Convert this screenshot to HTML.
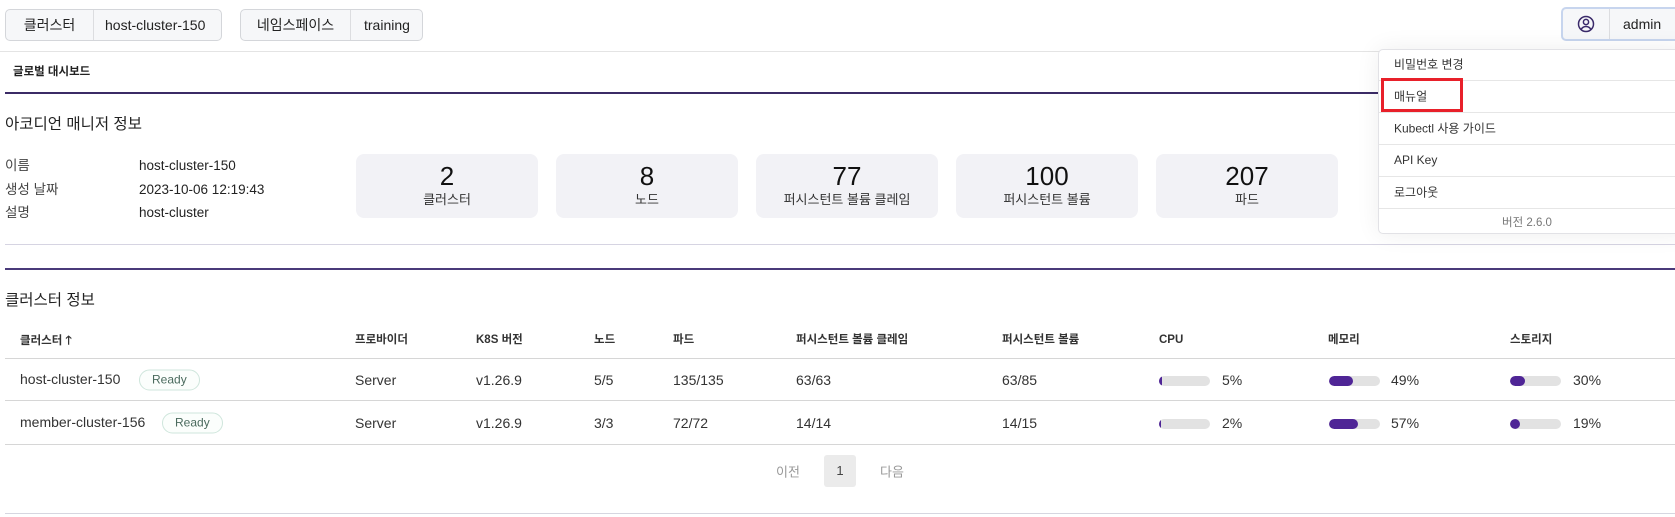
<!DOCTYPE html>
<html><head><meta charset="utf-8"><style>
*{box-sizing:border-box;margin:0;padding:0}
body{width:1675px;height:517px;overflow:hidden;background:#fff;font-family:"Liberation Sans","Noto Sans CJK KR",sans-serif;color:#222;position:relative}
.a{position:absolute;white-space:nowrap}
.box{position:absolute;border:1px solid #d4d6da;border-radius:5px;background:#f6f7f9;display:flex;font-size:14px;height:32px;top:9px;overflow:hidden;white-space:nowrap}
.box div{display:flex;align-items:center;padding:0 13px;white-space:nowrap;flex-shrink:0}
.box div+div{border-left:1px solid #dcdde0}
.hl{position:absolute;height:1px;background:#ddd}
.card{position:absolute;top:154px;height:64px;width:182px;background:#f2f2f6;border-radius:8px;text-align:center}
.card .n{font-size:26px;margin-top:7px;line-height:30px;color:#111}
.card .l{font-size:13px;line-height:18px;color:#333}
.th{position:absolute;top:333px;font-size:11.5px;line-height:15px;font-weight:bold;color:#333;white-space:nowrap}
.td{position:absolute;font-size:14px;color:#333;transform:translateY(-50%);white-space:nowrap}
.badge{position:absolute;height:21px;border:1px solid #cfe6dc;border-radius:11px;font-size:12px;color:#4b6b5e;padding:0 12px;line-height:19px;transform:translateY(-50%);background:#fbfefc}
.bar{position:absolute;width:51px;height:10px;background:#e2e2e2;border-radius:5px;overflow:hidden;transform:translateY(-50%)}
.bar i{display:block;height:10px;background:#4f2596;border-radius:5px}
.mi{position:absolute;left:1394px;font-size:12px;color:#333;transform:translateY(-50%);white-space:nowrap}
.ml{position:absolute;left:1379px;width:300px;height:1px;background:#e6e6e6}
</style></head><body>
<div class="box" style="left:5px;width:217px"><div style="width:87px;justify-content:center">클러스터</div><div style="padding:0 11px">host-cluster-150</div></div>
<div class="box" style="left:240px;width:183px"><div style="width:109px;justify-content:center">네임스페이스</div><div>training</div></div>
<div class="box" style="left:1561px;width:120px;top:7px;height:34px;border:2px solid #c7d5ee"><div style="width:46px;justify-content:center;padding:0"><svg width="18" height="18" viewBox="0 0 18 18"><circle cx="9" cy="9" r="7.5" fill="none" stroke="#3a2a6a" stroke-width="1.5"/><circle cx="9" cy="7" r="2.6" fill="none" stroke="#3a2a6a" stroke-width="1.5"/><path d="M4.2 14.3c1.2-2 2.8-2.8 4.8-2.8s3.6.8 4.8 2.8" fill="none" stroke="#3a2a6a" stroke-width="1.5"/></svg></div><div>admin</div></div>

<div class="hl" style="top:51px;left:0;width:1675px;background:#e4e4e4"></div>
<div class="a" style="left:13px;top:63px;font-size:11.5px;font-weight:bold;color:#222">글로벌 대시보드</div>
<div class="hl" style="top:92px;left:5px;width:1670px;height:2px;background:#3b2b66"></div>
<div class="a" style="left:5px;top:112px;font-size:15.5px">아코디언 매니저 정보</div>
<div class="a" style="left:5px;top:154px;font-size:13.5px;line-height:23.5px;color:#444">이름<br>생성 날짜<br>설명</div>
<div class="a" style="left:139px;top:154px;font-size:13.5px;line-height:23.5px;color:#222">host-cluster-150<br>2023-10-06 12:19:43<br>host-cluster</div>

<div class="card" style="left:356px"><div class="n">2</div><div class="l">클러스터</div></div>
<div class="card" style="left:556px"><div class="n">8</div><div class="l">노드</div></div>
<div class="card" style="left:756px"><div class="n">77</div><div class="l">퍼시스턴트 볼륨 클레임</div></div>
<div class="card" style="left:956px"><div class="n">100</div><div class="l">퍼시스턴트 볼륨</div></div>
<div class="card" style="left:1156px"><div class="n">207</div><div class="l">파드</div></div>

<div class="hl" style="top:244px;left:5px;width:1670px;background:#d6d4e2"></div>
<div class="hl" style="top:268px;left:5px;width:1670px;height:2px;background:#4a3a7a"></div>
<div class="a" style="left:5px;top:288px;font-size:15.5px">클러스터 정보</div>

<div class="th" style="left:20px">클러스터 <span style="font-size:12px">🡑</span></div>
<div class="th" style="left:355px">프로바이더</div>
<div class="th" style="left:476px">K8S 버전</div>
<div class="th" style="left:594px">노드</div>
<div class="th" style="left:673px">파드</div>
<div class="th" style="left:796px">퍼시스턴트 볼륨 클레임</div>
<div class="th" style="left:1002px">퍼시스턴트 볼륨</div>
<div class="th" style="left:1159px">CPU</div>
<div class="th" style="left:1328px">메모리</div>
<div class="th" style="left:1510px">스토리지</div>
<div class="hl" style="top:358px;left:5px;width:1670px;background:#d6d6d6"></div>
<div class="hl" style="top:400px;left:5px;width:1670px;background:#d6d6d6"></div>
<div class="hl" style="top:444px;left:5px;width:1670px;background:#d6d6d6"></div>

<div class="td" style="left:20px;top:379px">host-cluster-150</div>
<div class="badge" style="left:139px;top:380px">Ready</div>
<div class="td" style="left:355px;top:380px">Server</div>
<div class="td" style="left:476px;top:380px">v1.26.9</div>
<div class="td" style="left:594px;top:380px">5/5</div>
<div class="td" style="left:673px;top:380px">135/135</div>
<div class="td" style="left:796px;top:380px">63/63</div>
<div class="td" style="left:1002px;top:380px">63/85</div>
<div class="bar" style="left:1159px;top:381px"><i style="width:3px"></i></div><div class="td" style="left:1222px;top:380px">5%</div>
<div class="bar" style="left:1329px;top:381px"><i style="width:24px"></i></div><div class="td" style="left:1391px;top:380px">49%</div>
<div class="bar" style="left:1510px;top:381px"><i style="width:15px"></i></div><div class="td" style="left:1573px;top:380px">30%</div>

<div class="td" style="left:20px;top:422px">member-cluster-156</div>
<div class="badge" style="left:162px;top:423px">Ready</div>
<div class="td" style="left:355px;top:423px">Server</div>
<div class="td" style="left:476px;top:423px">v1.26.9</div>
<div class="td" style="left:594px;top:423px">3/3</div>
<div class="td" style="left:673px;top:423px">72/72</div>
<div class="td" style="left:796px;top:423px">14/14</div>
<div class="td" style="left:1002px;top:423px">14/15</div>
<div class="bar" style="left:1159px;top:424px"><i style="width:2px"></i></div><div class="td" style="left:1222px;top:423px">2%</div>
<div class="bar" style="left:1329px;top:424px"><i style="width:29px"></i></div><div class="td" style="left:1391px;top:423px">57%</div>
<div class="bar" style="left:1510px;top:424px"><i style="width:10px"></i></div><div class="td" style="left:1573px;top:423px">19%</div>

<div class="td" style="left:776px;top:471px;color:#999;font-size:13px">이전</div>
<div class="a" style="left:824px;top:455px;width:32px;height:32px;background:#ebebeb;border-radius:3px;text-align:center;line-height:32px;font-size:13px;color:#444">1</div>
<div class="td" style="left:880px;top:471px;color:#999;font-size:13px">다음</div>
<div class="hl" style="top:513px;left:5px;width:1670px;background:#d6d6e0"></div>

<div class="a" style="left:1378px;top:49px;width:310px;height:185px;background:#fff;border:1px solid #e2e2e6;border-radius:5px;box-shadow:0 0 24px rgba(0,0,0,0.07)"></div>
<div class="mi" style="top:64px">비밀번호 변경</div>
<div class="ml" style="top:80px"></div>
<div class="mi" style="top:96px">매뉴얼</div>
<div class="a" style="left:1381px;top:78px;width:82px;height:34px;border:3px solid #e8202a"></div>
<div class="ml" style="top:112px"></div>
<div class="mi" style="top:128px">Kubectl 사용 가이드</div>
<div class="ml" style="top:144px"></div>
<div class="mi" style="top:160px">API Key</div>
<div class="ml" style="top:176px"></div>
<div class="mi" style="top:192px">로그아웃</div>
<div class="ml" style="top:208px"></div>
<div class="mi" style="top:222px;left:1502px;color:#777;font-size:11.5px">버전 2.6.0</div>
</body></html>
